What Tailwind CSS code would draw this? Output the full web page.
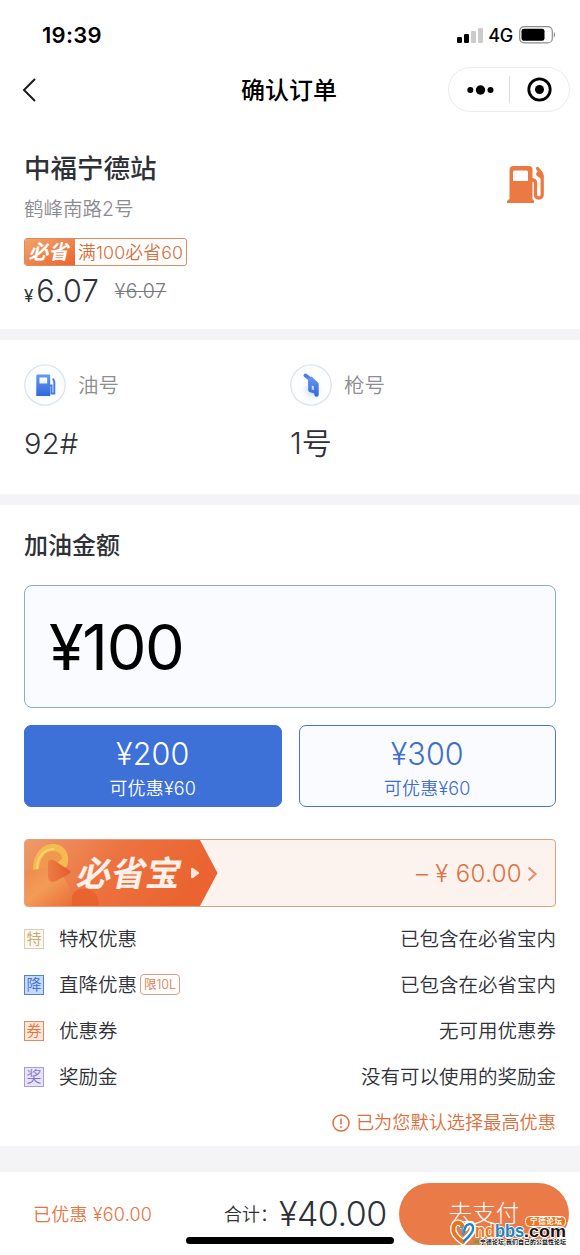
<!DOCTYPE html>
<html lang="zh-CN">
<head>
<meta charset="utf-8">
<title>确认订单</title>
<script src="https://cdn.jsdelivr.net/npm/@tailwindcss/browser@4"></script>
</head>
<body class="bg-white">
<div class="relative flex h-[1255px] w-[580px] flex-col overflow-hidden bg-white font-['Inter','Noto_Sans_CJK_SC',sans-serif] text-[#2f3138] whitespace-nowrap">

  <!-- Status bar -->
  <div class="flex h-[67px] items-center justify-between pt-[3px] pr-[24px] pl-[42px] text-black">
    <span class="text-[22px] font-semibold tracking-[0.3px]">19:39</span>
    <div class="flex items-center">
      <svg width="27" height="17" viewBox="0 0 27 17"><rect x="0" y="10" width="5" height="6" rx="1.2"/><rect x="7" y="7" width="5" height="9" rx="1.2"/><rect x="14" y="4" width="5" height="12" rx="1.2" fill="#ccc"/><rect x="21" y="1" width="5" height="15" rx="1.2" fill="#ccc"/></svg>
      <span class="ml-[4px] text-[18px] tracking-[-0.3px] font-medium">4G</span>
      <svg class="ml-[6px]" width="37" height="18" viewBox="0 0 37 18"><rect x=".7" y=".7" width="32.6" height="16.2" rx="4.5" fill="none" stroke="#8d8d8d" stroke-width="1.2"/><rect x="2.5" y="2.8" width="23" height="12" rx="2.4"/><path d="M34.8 6v5.5c1.7-.8 1.7-4.700 0-5.500z" fill="#8d8d8d"/></svg>
    </div>
  </div>

  <!-- Navigation -->
  <div class="grid h-[45px] grid-cols-[190px_1fr_190px] items-center pr-[10px]">
    <svg class="ml-[22px]" width="16" height="26" viewBox="0 0 16 26" fill="none" stroke="#1c1c1c" stroke-width="2"><path d="M13 2 2 13l11 11"/></svg>
    <span class="pt-[2px] pl-[8px] text-center text-[24px] leading-[43px] font-medium text-black">确认订单</span>
    <div class="flex h-[45px] w-[122px] items-center justify-self-end rounded-full border border-[#ebebeb]">
      <svg width="120" height="43" viewBox="0 0 120 43"><circle cx="21.300" cy="22" r="3"/><circle cx="31.500" cy="22" r="4.700"/><circle cx="41.500" cy="22" r="3"/><path d="M60.500 8v27" stroke="#dcdcdc"/><circle cx="90.500" cy="21.500" r="10.700" fill="none" stroke="#000" stroke-width="2.800"/><circle cx="90.500" cy="21.500" r="4.500"/></svg>
    </div>
  </div>

  <!-- Station -->
  <section class="flex h-[217px] justify-between pr-[34px] pl-[24px]">
    <div class="flex flex-col items-start">
      <h1 class="mt-[38px] h-[36px] text-[26.500px] leading-[36px] font-medium">中福宁德站</h1>
      <p class="mt-[9px] h-[28px] text-[19.500px] leading-[28px] font-[350] text-[#8b8c90]">鹤峰南路2号</p>
      <div class="mt-[15px] flex h-[28px] w-[163px] overflow-hidden rounded-[3px] border border-[#e08a62]">
        <span class="flex w-[50px] items-center justify-center bg-linear-to-br from-[#f0a468] to-[#ea6230]"><span class="-skew-x-12 text-[20px] leading-[26px] font-bold text-white">必省</span></span>
        <span class="flex-1 pt-px pl-[3px] text-[17.800px] leading-[26px] font-[350] tracking-[0.150px] text-[#d96d3c]">满100必省60</span>
      </div>
      <div class="mt-[7px] flex h-[40px] items-center">
        <span class="flex items-baseline leading-[40px]"><span class="text-[17px]">¥</span><span class="ml-[3px] text-[30.500px] font-[350] tracking-[0.700px]">6.07</span></span>
        <span class="ml-[15px] pb-[4px] text-[19.500px] leading-[28px] font-[350] tracking-[0.500px] text-[#77787c] line-through">¥6.07</span>
      </div>
    </div>
    <svg class="mt-[53px]" width="39" height="40" viewBox="0 0 39 40"><path fill="#ea7a42" fill-rule="evenodd" d="M6.500 1h15.500a3.500 3.500 0 0 1 3.500 3.500V34l1.500 2v2H0v-2l2.500-2V5a4 4 0 0 1 4-4zM7.500 5.500a1.500 1.500 0 0 0-1.500 1.500v9h15V7a1.500 1.500 0 0 0-1.500-1.500z"/><path d="M25 15h.500q3 0 3 3v11.500q0 3.500 3.300 3.500t3.400-3.500V11q0-2-1.700-4L30.500 3.500" fill="none" stroke="#ea7a42" stroke-width="3.300" stroke-linecap="round" stroke-linejoin="round"/><path d="m31.500 5-2.500 3.500q0 3.500 6.500 5V8z" fill="#ea7a42"/></svg>
  </section>
  <div class="h-[11px] bg-[#f4f4f7]"></div>

  <!-- Fuel grade and gun -->
  <section class="grid h-[154px] grid-cols-[266px_1fr] pt-[24px] pl-[24px]">
    <div>
      <div class="flex h-[42px] items-center gap-[12px] text-[20.500px] font-[350] text-[#8d8e92]">
        <svg width="42" height="42" viewBox="0 0 42 42"><defs><radialGradient id="glow"><stop offset="0" stop-color="#bad1fb"/><stop offset="1" stop-color="#fff" stop-opacity="0"/></radialGradient><linearGradient id="blue" x2="0" y2="1"><stop stop-color="#6798ee"/><stop offset="1" stop-color="#2f68dc"/></linearGradient></defs><circle cx="21" cy="21" r="20.200" fill="#fdfeff" stroke="#dbe3f2" stroke-width="1.300"/><circle cx="20" cy="25" r="14" fill="url(#glow)"/><path fill="url(#blue)" fill-rule="evenodd" d="M13.500 10.500H25a1.200 1.200 0 0 1 1.200 1.200V32H12.300V11.700a1.200 1.200 0 0 1 1.200-1.200zM15.500 13.500v6h7.700v-6z"/><path d="M26 21.500h1.500v8h2.800V18l-1.300-3.500" fill="none" stroke="#477fe4" stroke-width="2"/></svg>
        <span class="pt-[2px]">油号</span>
      </div>
      <div class="mt-[18px] text-[29px] leading-[40px] font-[350] tracking-[0.300px]">92#</div>
    </div>
    <div>
      <div class="flex h-[42px] items-center gap-[12px] text-[20.500px] font-[350] text-[#8d8e92]">
        <svg width="42" height="42" viewBox="0 0 42 42"><circle cx="21" cy="21" r="20.200" fill="#fdfeff" stroke="#dbe3f2" stroke-width="1.300"/><circle cx="22" cy="26" r="13" fill="url(#glow)"/><path d="m15.500 11.500 6 4.500" stroke="#4880e5" stroke-width="4" stroke-linecap="round"/><path fill="url(#blue)" fill-rule="evenodd" d="m18 14 3.500-1.500 6.200 5.700q1 1 1 2.300V30.500q0 2.200-2.200 2.200t-2.200-2.200v-1l-4.800-1.500q-1.300-.500-1.300-2zM21.800 21.500v4l2 .800v-4z"/></svg>
        <span class="pt-[2px]">枪号</span>
      </div>
      <div class="mt-[17px] text-[30px] leading-[40px] font-[350]">1号</div>
    </div>
  </section>
  <div class="h-[11px] bg-[#f4f4f7]"></div>

  <!-- Amount -->
  <section class="flex h-[641px] flex-col px-[24px]">
    <h2 class="mt-[23px] h-[36px] text-[24px] leading-[36px] font-medium">加油金额</h2>
    <div class="mt-[21px] flex h-[124px] items-center rounded-[8px] border border-[#8faac9] bg-[#fafbfe] pt-[2px] pl-[24px] text-[63px] tracking-[-1.300px] text-black">¥100</div>
    <div class="mt-[17px] grid grid-cols-2 gap-[17px] text-center">
      <div class="flex h-[82px] flex-col rounded-[7px] border border-[#3d71d8] bg-[#3d71d8] pt-[9px] text-white">
        <span class="h-[38px] text-[30.500px] leading-[38px] font-[350] tracking-[0.100px]">¥200</span>
        <span class="mt-[2px] text-[18px] leading-[28px] font-[350] tracking-[0.200px]">可优惠¥60</span>
      </div>
      <div class="flex h-[82px] flex-col rounded-[7px] border-[1.500px] border-[#4b77c2] bg-[#fafbfe] pt-[9px] text-[#3f6fca]">
        <span class="h-[38px] text-[30.500px] leading-[38px] font-[350] tracking-[0.100px]">¥300</span>
        <span class="mt-[2px] text-[18px] leading-[28px] font-[350] tracking-[0.200px]">可优惠¥60</span>
      </div>
    </div>

    <!-- Savings banner -->
    <div class="mt-[32px] flex h-[68px] shrink-0 items-center justify-between overflow-hidden rounded-[4px] border border-[#dfa083] bg-[#fcf2ee] pr-[17px]">
      <div class="grid h-[66px] w-[194px] items-center">
        <svg class="col-start-1 row-start-1" width="194" height="66" viewBox="0 0 194 66"><defs><linearGradient id="ban" x2="1" y2=".25"><stop stop-color="#ee9a68"/><stop offset=".5" stop-color="#ec7340"/><stop offset="1" stop-color="#ea6330"/></linearGradient><linearGradient id="bag" x2="1" y2="1"><stop stop-color="#ef8a50"/><stop offset=".45" stop-color="#f29c56"/><stop offset="1" stop-color="#ec6b38"/></linearGradient><linearGradient id="tri" x2="1"><stop stop-color="#ed7c45"/><stop offset="1" stop-color="#e45d2d"/></linearGradient></defs><path d="M0 0h175l17.500 33L175 66H0z" fill="url(#ban)"/><path d="M8 30C8 14 17 4 28 4s18 10 14 22l-9 9H8z" fill="#f5bb50"/><path d="M14 30c0-11 6-19 14-19 5 0 9 3 9 8l-14 12z" fill="#ee994b"/><path d="M12 29c0-12 7-20 17-20" fill="none" stroke="#f8d174" stroke-width="2"/><path d="M0 31q13-2 24-3 16 5 20 20l4 18H0z" fill="url(#bag)"/><path d="M23 22q2-4 7-1l14 9q3 2 0 4l-13 7q-7 3-8-4z" fill="url(#tri)"/><path d="M47 66V56q3-8 12-7 15 0 15 17z" fill="#e96331"/><path d="M166 29v8q0 2 2 1l5.500-4q1.500-1 0-2l-5.500-4q-2-1-2 1z" fill="#ffe7dc"/></svg>
        <span class="col-start-1 row-start-1 ml-[53px] pt-[2px] -skew-x-12 text-[34.500px] leading-[64px] font-bold text-[#fff0e8]">必省宝</span>
      </div>
      <div class="flex items-center pt-[2px] text-[24px] font-[350] text-[#de713e]">
        <span class="tracking-[0.350px]">– ¥ 60.00</span>
        <svg class="ml-[5px]" width="11" height="16" viewBox="0 0 11 16" fill="none" stroke="#e49068" stroke-width="2.200"><path d="m1.500 1.500 7 6.500-7 6.500"/></svg>
      </div>
    </div>

    <!-- Discount rows -->
    <div class="mt-[8px] flex flex-col text-[19.500px] leading-[46.200px] font-[350]">
      <div class="flex h-[46.200px] items-center">
        <span class="h-[20px] w-[20px] border border-[#d8cfb5] bg-[#fbf8ef] text-center text-[15px] leading-[18px] text-[#c3ad76]">特</span>
        <span class="ml-[15px] pt-px">特权优惠</span><span class="ml-auto pt-px">已包含在必省宝内</span>
      </div>
      <div class="flex h-[46.200px] items-center">
        <span class="h-[20px] w-[20px] border border-[#5181dd] bg-[#c5dafd] text-center text-[15px] leading-[18px] text-[#3c72dc]">降</span>
        <span class="ml-[15px]">直降优惠</span>
        <span class="ml-[3px] flex h-[21px] w-[40px] items-center justify-center rounded-[4px] border border-[#dba084] text-[12.500px] leading-[19px] text-[#d8764c]">限10L</span>
        <span class="ml-auto">已包含在必省宝内</span>
      </div>
      <div class="flex h-[46.200px] items-center">
        <span class="h-[20px] w-[20px] border border-[#df8b62] bg-[#fde7da] text-center text-[15px] leading-[18px] text-[#e0753e]">券</span>
        <span class="ml-[15px]">优惠券</span><span class="ml-auto">无可用优惠券</span>
      </div>
      <div class="flex h-[46.200px] items-center">
        <span class="h-[20px] w-[20px] border border-[#a79fd0] bg-[#e7e3fa] text-center text-[15px] leading-[18px] text-[#8678c6]">奖</span>
        <span class="ml-[15px]">奖励金</span><span class="ml-auto">没有可以使用的奖励金</span>
      </div>
    </div>
    <div class="flex h-[46px] items-center justify-end text-[18.200px] font-[350] text-[#dd6f3c]">
      <svg class="mr-[6px]" width="18" height="18" viewBox="0 0 18 18" fill="none" stroke="#dd6f3c" stroke-width="1.500"><circle cx="9" cy="9" r="8"/><path d="M9 4.500v6M9 12.200v1.800"/></svg>
      <span>已为您默认选择最高优惠</span>
    </div>
  </section>
  <div class="h-[26px] bg-[#f4f4f7]"></div>

  <!-- Payment bar -->
  <footer class="flex h-[83px] items-start pt-[11px] pl-[33px]">
    <span class="w-[191px] pt-px text-[18px] leading-[62px] font-[350] tracking-[0.200px] text-[#e5743f]">已优惠 ¥60.00</span>
    <span class="w-[55px] pt-px text-[18px] leading-[62px] font-[350]">合计：</span>
    <span class="w-[120px] text-[34px] leading-[62px] font-[350] tracking-[-0.500px]">¥40.00</span>
    <span class="h-[62px] w-[170px] rounded-full bg-[#ea7a48] text-center text-[23.500px] leading-[62px] font-light text-white">去支付</span>
  </footer>

  <!-- Home indicator -->
  <div class="absolute top-[1237px] left-[186px] h-[7px] w-[208px] rounded-full bg-black"></div>

  <!-- Forum watermark -->
  <svg class="absolute top-[1212px] left-[448px]" width="126" height="38" viewBox="0 0 126 38" stroke-linejoin="round">
    <g fill="none" stroke-linecap="round"><path d="M15 30C9 26 4 21 5.500 15s7-5 9-1M15 30c7-6 11-11 10-15s-6-4-8 1" stroke="#fff" stroke-width="6.500"/><path d="M15 30C9 26 4 21 5.500 15s7-5 9-1" stroke="#ee731d" stroke-width="4"/><path d="M16 29c7-6 10-10 9-14s-6-4-8 1l-2 6" stroke="#1788cd" stroke-width="2.400"/><path d="M11 16q4-3 4 6" stroke="#3aa5df" stroke-width="1.500"/></g>
    <g font-family="Liberation Sans, sans-serif" font-weight="700" stroke="#fff" stroke-width="2" paint-order="stroke"><text x="27" y="24.500" textLength="20" lengthAdjust="spacingAndGlyphs" fill="#ee7a20" font-size="19">nd</text><text x="47" y="24.500" textLength="29" lengthAdjust="spacingAndGlyphs" fill="#1685ca" font-size="19">bbs</text><text x="76" y="24.500" textLength="42" lengthAdjust="spacingAndGlyphs" fill="#151515" font-size="17">.com</text></g>
    <rect x="77.500" y="4.500" width="40" height="10" rx="4" fill="#ed761f" stroke="#fff"/>
    <text x="82" y="12.300" textLength="32" font-family="Noto Sans CJK SC, sans-serif" font-weight="700" font-size="7.500" fill="#fff">宁德论坛</text>
    <path d="m26 31 2-4 1 2 3-2-1 4z" fill="#54a946"/>
    <text x="32" y="31.500" textLength="86" font-family="Noto Sans CJK SC, sans-serif" font-weight="700" font-size="6" fill="#111" stroke="#fff" stroke-width="1.500" paint-order="stroke">宁德论坛,我们自己的公益性论坛</text>
  </svg>
</div>
</body>
</html>
